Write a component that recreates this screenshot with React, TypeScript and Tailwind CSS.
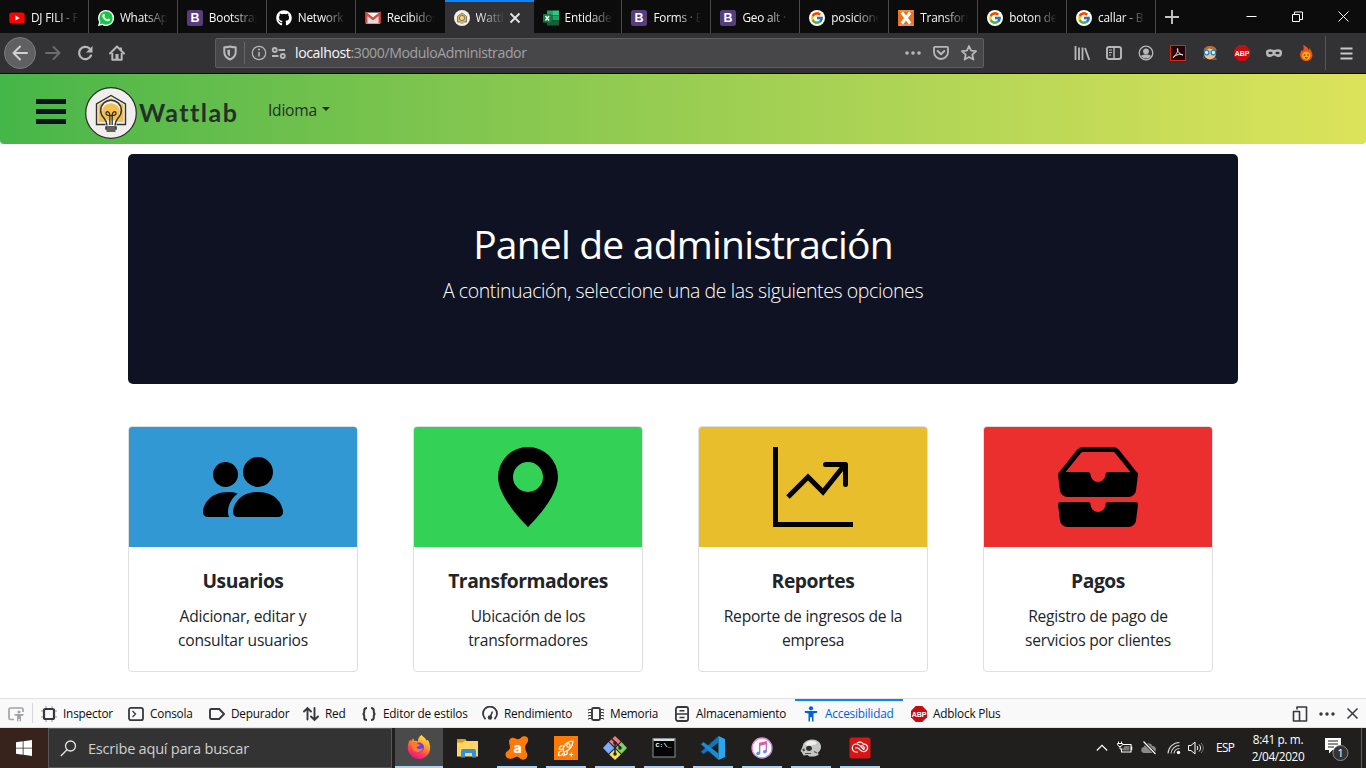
import type { ReactNode } from "react";
import { FaGithub } from "react-icons/fa";
import { FcGoogle } from "react-icons/fc";

const UI = "font-['Open_Sans','Noto_Sans',sans-serif]";

type IconProps = { children: ReactNode; box?: string; className?: string };

function Icon({ children, box = "0 0 16 16", className = "size-4" }: IconProps) {
  return (
    <svg viewBox={box} className={`shrink-0 ${className}`} fill="none">
      {children}
    </svg>
  );
}

/* ---------- favicons ---------- */

const YoutubeIcon = () => (
  <Icon>
    <rect x="0.3" y="2.4" width="15.4" height="11.2" rx="2.6" fill="#f00" />
    <path d="M6.4 5.6v4.8L10.6 8z" fill="#fff" />
  </Icon>
);

const WhatsappIcon = () => (
  <Icon>
    <path d="M8 0a8 8 0 1 1-3.8 15L0 16l1.1-4A8 8 0 0 1 8 0z" fill="#fff" />
    <circle cx="8" cy="8" r="6.7" fill="#12c843" />
    <path d="M1.7 14.3l.8-3 2 2.2z" fill="#12c843" />
    <path
      d="M5.4 3.9c.5-.3.9-.1 1.1.4l.5 1.2c.1.4-.2.7-.6 1.2.7 1.2 1.6 2.1 2.9 2.6.5-.5.7-1 1.2-.8l1.3.7c.5.3.3 1-.1 1.4-.7.7-1.6.9-2.6.6-2.6-.8-4.2-2.6-4.8-4.7-.2-1 .3-2 1.1-2.6z"
      fill="#fff"
    />
  </Icon>
);

const BootstrapIcon = () => (
  <Icon>
    <rect width="16" height="16" rx="2.5" fill="#563d7c" />
    <text x="8" y="12.4" textAnchor="middle" fontFamily="Liberation Sans" fontWeight="700" fontSize="12.5" fill="#fff">
      B
    </text>
  </Icon>
);

const GmailIcon = () => (
  <Icon>
    <path d="M1 2.500h14v11H1z" fill="#f3efee" />
    <path d="M1 13.500V5l7 5.500L15 5v8.500" fill="#e2dedd" />
    <path d="M1.300 13.500V3.600L8 9l6.700-5.400v9.900" stroke="#d9493d" strokeWidth="2.3" />
  </Icon>
);

const WattTabIcon = () => (
  <Icon>
    <circle cx="8" cy="8" r="8" fill="#f1f0ed" />
    <path d="M3.500 12V6.300L8 3l4.500 3.300V12z" fill="#e4b95c" stroke="#77705f" strokeWidth="0.9" />
    <circle cx="8" cy="8" r="2.6" fill="#f0d28c" stroke="#6b6455" strokeWidth="0.8" />
    <path d="M6.600 11h2.800v3H6.600z" fill="#bbb5a5" />
  </Icon>
);

const ExcelIcon = () => (
  <Icon>
    <path d="M4 .5h6v5H4z" fill="#21a366" />
    <path d="M10 .5h6v5h-6z" fill="#33c481" />
    <path d="M4 5.500h6v5H4z" fill="#107c41" />
    <path d="M10 5.500h6v5h-6z" fill="#21a366" />
    <path d="M4 10.500h12v5H4z" fill="#185c37" />
    <rect x="0" y="4" width="8.5" height="8.5" rx="0.6" fill="#107c41" />
    <path d="M2.500 6l3.600 4.500M6.100 6L2.500 10.500" stroke="#fff" strokeWidth="1.4" />
  </Icon>
);

const GoogleTabIcon = () => (
  <span className="flex size-4 shrink-0 items-center justify-center rounded-full bg-white">
    <FcGoogle size={14} />
  </span>
);

const XIcon = () => (
  <Icon>
    <rect width="16" height="16" fill="#e8731c" />
    <path d="M1 1h14M1 15h14" stroke="#f7b27c" strokeWidth="0.8" />
    <path d="M3.800 2.500l8.400 11M12.200 2.500l-8.400 11" stroke="#fff" strokeWidth="3" />
  </Icon>
);

const AbpIcon = () => (
  <Icon>
    <path d="M4.700 0h6.600L16 4.700v6.600L11.300 16H4.700L0 11.300V4.700z" fill="#c70d12" />
    <text x="8" y="10.900" textAnchor="middle" fontFamily="Liberation Sans" fontWeight="700" fontSize="8" fill="#fff" textLength="14.500" lengthAdjust="spacingAndGlyphs">
      ABP
    </text>
  </Icon>
);

/* ---------- browser chrome ---------- */

const tabs: { title: string; icon: ReactNode; active?: boolean }[] = [
  { title: "DJ FILI - F", icon: <YoutubeIcon /> },
  { title: "WhatsApp", icon: <WhatsappIcon /> },
  { title: "Bootstrap", icon: <BootstrapIcon /> },
  { title: "Network", icon: <FaGithub size={16} className="shrink-0 text-white" /> },
  { title: "Recibidos", icon: <GmailIcon /> },
  { title: "Wattlab", icon: <WattTabIcon />, active: true },
  { title: "Entidades", icon: <ExcelIcon /> },
  { title: "Forms · B", icon: <BootstrapIcon /> },
  { title: "Geo alt · B", icon: <BootstrapIcon /> },
  { title: "posiciones", icon: <GoogleTabIcon /> },
  { title: "Transform", icon: <XIcon /> },
  { title: "boton de", icon: <GoogleTabIcon /> },
  { title: "callar - B", icon: <GoogleTabIcon /> },
];

function TabStrip() {
  return (
    <div className="flex h-[33px] bg-[#0c0c0d]">
      <div className="grid w-[1156px] grid-cols-13">
        {tabs.map((t, i) => (
          <div
            key={i}
            className={
              t.active
                ? "flex items-center overflow-hidden border-t-2 border-[#0a84ff] bg-[#323234] pl-[9px] pt-px"
                : `flex items-center overflow-hidden pl-[9px] pt-[2px] ${i === 4 ? "" : "border-r border-[#4a4a4c]"}`
            }
          >
            {t.icon}
            <span
              className={`ml-1.5 overflow-hidden whitespace-nowrap text-[11.8px] tracking-[-0.2px] text-[#f9f9fa] ${
                t.active
                  ? "w-[29px] [mask-image:linear-gradient(to_right,black_10%,transparent)]"
                  : "w-[48px] [mask-image:linear-gradient(to_right,black_50%,transparent)]"
              }`}
            >
              {t.title}
            </span>
            {t.active && (
              <Icon className="ml-1 size-3" box="0 0 12 12">
                <path d="M1.500 1.500l9 9M10.500 1.500l-9 9" stroke="#e6e6e6" strokeWidth="1.8" />
              </Icon>
            )}
          </div>
        ))}
      </div>
      <div className="flex flex-1 items-center justify-between pl-[9px] pr-[17px]">
        <Icon className="size-[14px]" box="0 0 14 14">
          <path d="M7 0v14M0 7h14" stroke="#c4c4c6" strokeWidth="1.9" />
        </Icon>
        <div className="flex items-center gap-[35px]">
          <Icon className="size-[11px]" box="0 0 11 11">
            <path d="M.5 5.500h10" stroke="#fff" />
          </Icon>
          <Icon className="size-[11px]" box="0 0 11 11">
            <path d="M.5 3.500h7v7h-7zM2.500 3.500v-2.500h8v7.500h-3" stroke="#fff" />
          </Icon>
          <Icon className="size-[11px]" box="0 0 11 11">
            <path d="M.5.5l10 10M10.500.5l-10 10" stroke="#fff" />
          </Icon>
        </div>
      </div>
    </div>
  );
}

const G = "#b8b8b9";

function Toolbar() {
  return (
    <div className="flex h-[41px] items-center border-b border-[#0c0c0d] bg-[#323234]">
      <div className="ml-1 flex size-8 items-center justify-center rounded-full border border-[#7b7b7c] bg-[#606062]">
        <Icon>
          <path d="M15 8H1.500M8 1.500L1.500 8 8 14.500" stroke="#d0d0d1" strokeWidth="2" strokeLinecap="round" strokeLinejoin="round" />
        </Icon>
      </div>
      <div className="ml-[9px] flex gap-4">
        <Icon>
          <path d="M1 8h13.500M8.500 2L14.500 8l-6 6" stroke="#6d6d6f" strokeWidth="1.8" strokeLinecap="round" strokeLinejoin="round" />
        </Icon>
        <Icon>
          <path d="M14 10.500A6.200 6.200 0 1 1 12.600 3.500" stroke={G} strokeWidth="2.2" strokeLinecap="round" />
          <path d="M15.500 1v6.500H9z" fill={G} />
        </Icon>
        <Icon>
          <path d="M1 8.500L8 1.500l7 7" stroke={G} strokeWidth="2" strokeLinecap="round" strokeLinejoin="round" />
          <path d="M3.300 8v6.800h9.400V8M12 2.500v3" stroke={G} strokeWidth="2" strokeLinejoin="round" />
          <path d="M6.500 9h3v5.500h-3z" fill={G} />
        </Icon>
      </div>
      <div className="ml-[90px] flex h-[30px] w-[769px] items-center rounded-xs border border-[#5e5e60] bg-[#474749] pl-[6px] pr-[6px]">
        <Icon>
          <path d="M8 1.500c2 .7 3.700.8 5.700.8v4.700c0 3.500-2.200 6-5.700 7.500C4.500 13 2.300 10.500 2.300 7V2.300c2 0 3.700-.1 5.700-.8z" stroke={G} strokeWidth="2" strokeLinejoin="round" />
          <path d="M8 4.500v7c-2-1-2.700-2.500-2.700-4.500V5z" fill={G} />
        </Icon>
        <div className="ml-[6px] h-[22px] w-px bg-[#68686c]" />
        <Icon className="ml-[6px] size-4">
          <circle cx="8" cy="8" r="6.7" stroke={G} strokeWidth="1.2" />
          <path d="M8 7v4.500" stroke={G} strokeWidth="1.5" />
          <circle cx="8" cy="4.6" r="1" fill={G} />
        </Icon>
        <Icon className="ml-1 size-4">
          <circle cx="3.700" cy="5" r="2" stroke={G} strokeWidth="1.9" />
          <path d="M7.500 5H14M1 11h6.500" stroke={G} strokeWidth="1.9" />
          <circle cx="11.800" cy="11" r="2" stroke={G} strokeWidth="1.9" />
        </Icon>
        <div className="ml-[8px] flex-1 whitespace-nowrap text-[14.1px] tracking-[-0.4px] text-[#a2a2a3]">
          <span className="text-[#f9f9fa]">localhost</span>:3000/ModuloAdministrador
        </div>
        <div className="flex gap-3">
          <Icon>
            <circle cx="2" cy="8" r="1.8" fill={G} />
            <circle cx="8" cy="8" r="1.8" fill={G} />
            <circle cx="14" cy="8" r="1.8" fill={G} />
          </Icon>
          <Icon>
            <path d="M2 1.800h12a1 1 0 0 1 1 1V7a7 7 0 0 1-14 0V2.800a1 1 0 0 1 1-1z" stroke={G} strokeWidth="1.8" />
            <path d="M4.700 6L8 9.200 11.300 6" stroke={G} strokeWidth="2" strokeLinecap="round" strokeLinejoin="round" />
          </Icon>
          <Icon>
            <path d="M8 1l2.100 4.700 5 .5-3.800 3.400 1.100 5L8 12l-4.400 2.600 1.100-5L.9 6.200l5-.5z" stroke={G} strokeWidth="1.8" strokeLinejoin="round" />
          </Icon>
        </div>
      </div>
      <div className="ml-[90px] flex gap-4">
        <Icon>
          <path d="M1.500 1v14M5 2.500V15M8.500 2.500V15M11 3l4.300 12" stroke={G} strokeWidth="1.8" />
        </Icon>
        <Icon>
          <rect x="1" y="2" width="14" height="12" rx="2" stroke={G} strokeWidth="1.9" />
          <path d="M8 2v12" stroke={G} strokeWidth="1.5" />
          <path d="M3 5h3M3 7.500h3M3 10h2" stroke={G} />
        </Icon>
        <Icon>
          <circle cx="8" cy="8" r="6.8" stroke={G} strokeWidth="1.3" />
          <circle cx="8" cy="6.3" r="2.9" fill={G} />
          <path d="M3 11c1.500-2 8.500-2 10 0-2 3.300-8 3.300-10 0z" fill={G} />
        </Icon>
        <Icon>
          <rect x="0.5" y="0.5" width="15" height="15" fill="#250505" stroke="#e1240f" />
          <path d="M3 12.500c2-1.500 5.500-5.500 4.700-9C6.500 3 8 9.500 13 10c-2-1.500-7-.5-10 2.500z" stroke="#e6e6e6" strokeWidth="1" />
        </Icon>
        <Icon>
          <circle cx="8" cy="8.500" r="6" fill="#f1c08c" />
          <path d="M1.500 6C2 3 4 1 8 1s7 2 6.500 5l-2-1L7 3.500 3 5.500z" fill="#b56f33" />
          <circle cx="4.600" cy="7.5" r="2.3" fill="#d3f0fb" stroke="#1a86cc" strokeWidth="1.3" />
          <circle cx="11.400" cy="7.500" r="2.300" fill="#d3f0fb" stroke="#1a86cc" strokeWidth="1.3" />
          <path d="M1 10l2 3.500-1.500 1zM11 13l3-.5 1 2.500h-5z" fill="#8a5a30" />
        </Icon>
        <AbpIcon />
        <Icon>
          <path d="M0 7c0-3 4-3.500 8-2 4-1.500 8-1 8 2 0 4-1 5-4 5-2 0-2.500-1.500-4-1.500S6 12 4 12C1 12 0 11 0 7z" fill={G} />
          <ellipse cx="4.5" cy="8" rx="2.2" ry="1.3" fill="#323234" />
          <ellipse cx="11.5" cy="8" rx="2.2" ry="1.3" fill="#323234" />
        </Icon>
        <Icon>
          <path d="M5 0c4 1.500 5 3 5.500 5 .5-.5.7-1 .5-2 2.500 2.500 3.500 5 3.500 7a6.200 6 0 0 1-12.500 0c0-2 1-3 1.500-5l1.500 1C5.800 4 6 2 5 0z" fill="#f0540f" />
          <circle cx="8.300" cy="10.6" r="4.2" fill="#f8a81c" />
          <path d="M5.800 10h1.500M9.300 10h1.500M7 12.500c.8.600 1.800.6 2.600 0" stroke="#5b1a06" />
        </Icon>
      </div>
      <div className="ml-[11px] h-[34px] w-px bg-[#55555a]" />
      <Icon className="ml-[14px] size-[13px]" box="0 0 13 13">
        <path d="M.5 1.500h12M.5 6.500h12M.5 11.500h12" stroke="#c8c8c9" strokeWidth="2" />
      </Icon>
    </div>
  );
}

/* ---------- web page ---------- */

function Logo() {
  return (
    <Icon className="size-[52px]" box="0 0 52 52">
      <circle cx="26" cy="26" r="25.3" fill="#f0efee" stroke="#2b2a26" strokeWidth="1.2" />
      <path d="M13.500 35V17.800L26 11l12.500 6.800V35z" fill="#f5bf4f" />
      <path d="M20.500 37.500H11.500V17L26 8.500 40.500 17v20.500H31.500" stroke="#33322d" strokeWidth="1.4" />
      <path d="M22 39c0-4-1.500-5.500-3.500-8A10.300 10.300 0 1 1 33.500 31c-2 2.500-3.500 4-3.500 8z" fill="#f0efee" />
      <circle cx="26" cy="25" r="8.8" fill="#f5bf4f" />
      <path d="M22 38.500c0-4-1.500-5.500-3.500-8A10.300 10.300 0 1 1 33.500 30.500c-2 2.500-3.500 4-3.500 8" stroke="#33322d" strokeWidth="1.5" />
      <path d="M24.800 38V28.500c-1.200.2-4.300-.3-3.800-2.600.6-2.200 3.800-1.400 3.800 2.600M27.200 38V28.500c1.200.2 4.300-.3 3.800-2.600-.6-2.200-3.800-1.400-3.800 2.600M24.800 28.500h2.400" stroke="#33322d" strokeWidth="1.3" />
      <path d="M21 40h10v2H21zM21.500 44h9" stroke="#33322d" strokeWidth="1.5" />
    </Icon>
  );
}

function Navbar() {
  return (
    <header className="flex h-[70px] rounded-b-sm bg-linear-to-r from-[#45b649] to-[#dce35b] pl-9">
      <div className="mt-[25px] flex h-[25px] w-[30px] flex-col justify-between">
        <div className="h-[5px] bg-[#0f1222]" />
        <div className="h-[5px] bg-[#0f1222]" />
        <div className="h-[5px] bg-[#0f1222]" />
      </div>
      <div className="ml-[19px] mt-[13px]">
        <Logo />
      </div>
      <div className="ml-[2px] mt-[21px] w-[129px] font-[Lato,sans-serif] text-[25px] font-bold leading-[34px] tracking-[1.5px] text-[#26302a]">
        Wattlab
      </div>
      <div className="mt-[24px] flex h-6 text-[15.6px] leading-6 tracking-[-0.25px] text-[#262b2e]">
        Idioma
        <span className="ml-[5px] mt-[9px] size-0 border-x-[4.8px] border-t-[4.8px] border-x-transparent border-t-[#1f2d1f]" />
      </div>
    </header>
  );
}

const cards = [
  {
    title: "Usuarios",
    lines: ["Adicionar, editar y", "consultar usuarios"],
    color: "bg-[#3298d3]",
    paths: [
      "M7 14s-1 0-1-1 1-4 5-4 5 3 5 4-1 1-1 1H7zm4-6a3 3 0 1 0 0-6 3 3 0 0 0 0 6z",
      "M5.216 14A2.238 2.238 0 0 1 5 13c0-1.355.68-2.75 1.936-3.72A6.325 6.325 0 0 0 5 9c-4 0-5 3-5 4s1 1 1 1h4.216z",
      "M4.500 8a2.500 2.500 0 1 0 0-5 2.500 2.500 0 0 0 0 5z",
    ],
  },
  {
    title: "Transformadores",
    lines: ["Ubicación de los", "transformadores"],
    color: "bg-[#33d256]",
    paths: ["M8 16s6-5.686 6-10A6 6 0 0 0 2 6c0 4.314 6 10 6 10zm0-7a3 3 0 1 0 0-6 3 3 0 0 0 0 6z"],
  },
  {
    title: "Reportes",
    lines: ["Reporte de ingresos de la", "empresa"],
    color: "bg-[#e8be2d]",
    paths: [
      "M0 0h1v16H0V0zm1 15h15v1H1v-1z",
      "M14.390 4.312L10.041 9.750 7 6.707l-3.646 3.647-.708-.708L7 5.293 9.959 8.250l3.650-4.563.781.624z",
      "M10 3.500a.5.5 0 0 1 .5-.5h4a.5.5 0 0 1 .5.5v4a.5.5 0 0 1-1 0V4h-3.500a.5.5 0 0 1-.5-.5z",
    ],
  },
  {
    title: "Pagos",
    lines: ["Registro de pago de", "servicios por clientes"],
    color: "bg-[#eb2e2e]",
    paths: [
      "M.125 11.170A.5.5 0 0 1 .5 11H6a.5.5 0 0 1 .5.5 1.500 1.500 0 0 0 3 0 .5.5 0 0 1 .5-.5h5.500a.5.5 0 0 1 .496.562l-.390 3.124A1.500 1.500 0 0 1 14.117 16H1.883a1.500 1.500 0 0 1-1.489-1.314l-.390-3.124a.5.5 0 0 1 .121-.393z",
      "M3.810.563A1.500 1.500 0 0 1 4.980 0h6.040a1.500 1.500 0 0 1 1.170.563l3.700 4.625a.5.5 0 0 1-.780.624l-3.700-4.624A.5.5 0 0 0 11.020 1H4.980a.5.5 0 0 0-.390.188L.890 5.812a.5.5 0 1 1-.780-.624L3.810.563z",
      "M.125 5.170A.5.5 0 0 1 .5 5H6a.5.5 0 0 1 .5.5 1.500 1.500 0 0 0 3 0A.5.5 0 0 1 10 5h5.500a.5.5 0 0 1 .496.562l-.390 3.124A1.500 1.500 0 0 1 14.117 10H1.883A1.500 1.500 0 0 1 .394 8.686l-.390-3.124a.5.5 0 0 1 .121-.393z",
    ],
  },
];

function Page() {
  return (
    <main className="h-[624px] bg-white">
      <Navbar />
      <div className="mx-auto mt-2.5 w-[1110px]">
        <section className="flex h-[230px] flex-col items-center rounded-[5px] bg-[#0f1222] pt-[63px] text-white">
          <h1 className="whitespace-nowrap text-[39px] leading-[54px] tracking-[-0.8px]">Panel de administración</h1>
          <p className="mt-[5px] whitespace-nowrap text-[19.5px] font-light leading-[30px] tracking-[-0.4px]">
            A continuación, seleccione una de las siguientes opciones
          </p>
        </section>
        <section className="mt-[42px] flex gap-[55px]">
          {cards.map((c) => (
            <article key={c.title} className="h-[246px] w-[230px] overflow-hidden rounded border border-[#dfdfdf]">
              <div className={`flex h-[120px] items-center justify-center ${c.color}`}>
                <Icon className="size-20">
                  {c.paths.map((d) => (
                    <path key={d} d={d} fill="#000" fillRule="evenodd" />
                  ))}
                </Icon>
              </div>
              <div className="pt-[20px] text-center text-[#212529]">
                <h2 className="text-[19.3px] font-bold leading-7 tracking-[-0.45px]">{c.title}</h2>
                <p className="mt-[9px] whitespace-nowrap text-[15.6px] leading-6 tracking-[-0.25px]">
                  {c.lines[0]}
                  <br />
                  {c.lines[1]}
                </p>
              </div>
            </article>
          ))}
        </section>
      </div>
    </main>
  );
}

/* ---------- developer tools ---------- */

const D = "#38383d";

const tools: { name: string; width: string; icon: ReactNode; active?: boolean }[] = [
  {
    name: "Inspector",
    width: "w-[87px]",
    icon: (
      <Icon>
        <rect x="3" y="3" width="10" height="10" rx="1.5" stroke={D} strokeWidth="2.2" />
        <path d="M5 0v2M11 0v2M5 14v2M11 14v2M0 5h2M14 5h2M0 11h2M14 11h2" stroke="#98989b" strokeWidth="1" />
      </Icon>
    ),
  },
  {
    name: "Consola",
    width: "w-[81px]",
    icon: (
      <Icon>
        <rect x="1" y="1.8" width="14" height="12.4" rx="2" stroke={D} strokeWidth="1.8" />
        <path d="M4.500 5l3 3-3 3" stroke={D} strokeWidth="1.3" />
      </Icon>
    ),
  },
  {
    name: "Depurador",
    width: "w-[94px]",
    icon: (
      <Icon>
        <path d="M2.200 3h8L15 8l-4.800 5h-8A1.200 1.200 0 0 1 1 11.800V4.200A1.200 1.200 0 0 1 2.200 3z" stroke={D} strokeWidth="1.9" strokeLinejoin="round" />
      </Icon>
    ),
  },
  {
    name: "Red",
    width: "w-[58px]",
    icon: (
      <Icon>
        <path d="M4.500 13.500V2M1 5.500L4.500 2 8 5.500M11.500 2v12M8 10.500l3.500 3.500 3.500-3.500" stroke={D} strokeWidth="1.9" strokeLinecap="round" />
      </Icon>
    ),
  },
  {
    name: "Editor de estilos",
    width: "w-[121px]",
    icon: (
      <Icon>
        <path
          d="M6 2C3.500 2 3.200 3 3.200 4.500V6c0 1-.5 2-1.700 2 1.200 0 1.700 1 1.700 2v1.500C3.200 13 3.500 14 6 14M10 2c2.500 0 2.800 1 2.800 2.500V6c0 1 .5 2 1.700 2-1.200 0-1.700 1-1.700 2v1.500c0 1.500-.3 2.500-2.800 2.500"
          stroke={D}
          strokeWidth="2"
        />
      </Icon>
    ),
  },
  {
    name: "Rendimiento",
    width: "w-[106px]",
    icon: (
      <Icon>
        <path d="M3 12.500A7 7 0 1 1 13 12.500" stroke={D} strokeWidth="1.8" strokeLinecap="round" />
        <circle cx="8" cy="11.5" r="2.2" fill={D} />
        <path d="M8 11.500L10.500 5.500" stroke={D} strokeWidth="1.6" />
      </Icon>
    ),
  },
  {
    name: "Memoria",
    width: "w-[86px]",
    icon: (
      <Icon>
        <rect x="4" y="2" width="8" height="12" rx="1.5" stroke={D} strokeWidth="1.9" />
        <path d="M3 3.500H.5v1M3 6.500H.5v1M3 9.500H.5v1M3 12.500H.5v1M13 3.500h2.500v1M13 6.500h2.500v1M13 9.500h2.500v1M13 12.500h2.500v1" stroke={D} />
      </Icon>
    ),
  },
  {
    name: "Almacenamiento",
    width: "w-[129px]",
    icon: (
      <Icon>
        <rect x="1.9" y="1" width="12.2" height="14" rx="2" stroke={D} strokeWidth="1.8" />
        <path d="M2 8h12M5.500 4.800h5M5.500 11.500h5" stroke={D} strokeWidth="1.4" />
      </Icon>
    ),
  },
  {
    name: "Accesibilidad",
    width: "w-[108px]",
    active: true,
    icon: (
      <Icon>
        <circle cx="8" cy="2.3" r="2.1" fill="#0060df" />
        <path d="M1.800 5h12.400v1.800L10.500 7.500v8H9v-4.300H7v4.300H5.500v-8L1.800 6.800z" fill="#0060df" />
      </Icon>
    ),
  },
  { name: "Adblock Plus", width: "w-[107px]", icon: <AbpIcon /> },
];

function DevTools() {
  return (
    <div className="flex h-[30px] border-b border-t border-[#e0e0e2] bg-[#f9f9fa]">
      <div className="my-1 flex w-[33px] items-center border-r border-[#d7d7db] pl-2">
        <Icon className="mt-px size-4">
          <path d="M6 13.500H2.500A1.500 1.500 0 0 1 1 12V3.500A1.500 1.500 0 0 1 2.500 2h11A1.500 1.500 0 0 1 15 3.500V6" stroke="#a4a4a8" strokeWidth="1.7" />
          <circle cx="11" cy="6" r="1.6" fill="#a4a4a8" />
          <path d="M6.500 8h9v1.500l-2.500.5v5.500h-1.300V13h-1.400v2.500H9V10l-2.500-.5z" fill="#a4a4a8" />
        </Icon>
      </div>
      {tools.map((t) => (
        <div
          key={t.name}
          className={`flex shrink-0 items-center gap-1.5 whitespace-nowrap pl-2 text-[11.8px] tracking-[-0.2px] ${t.width} ${
            t.active ? "border-t-2 border-[#0a84ff] pb-px text-[#0060df]" : "pt-px text-[#0c0c0d]"
          }`}
        >
          {t.icon}
          {t.name}
        </div>
      ))}
      <div className="ml-auto flex items-center gap-[11px] pr-[7px] pt-px">
        <Icon>
          <path d="M5 3.500V1h9.500v14H8M1.500 5.500h6V15h-6z" stroke={D} strokeWidth="1.6" strokeLinejoin="round" />
        </Icon>
        <Icon>
          <circle cx="2" cy="8" r="1.7" fill={D} />
          <circle cx="8" cy="8" r="1.7" fill={D} />
          <circle cx="14" cy="8" r="1.7" fill={D} />
        </Icon>
        <Icon className="size-[13px]" box="0 0 13 13">
          <path d="M1.500 1.500l10 10M11.500 1.500l-10 10" stroke={D} strokeWidth="1.5" />
        </Icon>
      </div>
    </div>
  );
}

/* ---------- taskbar ---------- */

const apps: { id: string; icon: ReactNode; running: boolean }[] = [
  {
    id: "explorer",
    running: false,
    icon: (
      <Icon box="0 0 24 24" className="size-6">
        <path d="M1 3h8l1.500 2H22v15.500H1z" fill="#ffd561" />
        <path d="M1 3h8l1.500 2H8L7 6.500H1z" fill="#d99b16" />
        <path d="M5 21.500V15a2 2 0 0 1 2-2h11a2 2 0 0 1 2 2v6.500h-4V17H9v4.500z" fill="#2f8fe0" />
      </Icon>
    ),
  },
  {
    id: "avast",
    running: true,
    icon: (
      <Icon box="0 0 24 24" className="size-6">
        <path
          d="M4.500 3.800C6 1.500 8.500 1.500 10.500 2.500c3 1.300 4 .5 5.500-.8C18-.3 21.500-.3 22.800 2.200c1 2.500-.3 4-1.500 5.800-1.500 2.300-1.500 4.500-.3 7 1.200 2.300 2.200 4.500.5 7-2 2.500-5 2-6.800.3-1.700-1.600-3-1.800-5-.9-2.700 1.200-5.500 2.300-8 .2C-.3 19.300.3 16.500 2.500 15c2.300-1.500 2.800-3 2.300-5.200C4.400 7.700 3.500 5.700 4.500 3.800z"
          fill="#ff7b08"
        />
        <text x="12.500" y="16.500" textAnchor="middle" fontFamily="Inter" fontWeight="800" fontSize="14" fill="#fff">
          a
        </text>
      </Icon>
    ),
  },
  {
    id: "rocket",
    running: true,
    icon: (
      <Icon box="0 0 24 24" className="size-6">
        <rect width="24" height="24" fill="#ff7a00" />
        <path d="M9 14c0-4 4-9 10-9 0 5-4 10-9 11zM10.500 9.500L6.500 10 5 13l4 .5M13.500 14.500L13 18l-3 1.500.5-3.500M8 15l-3 1-.5 3.500L8 19l1-2M15.300 18.500h4M17.300 16.500v4" stroke="#fff" strokeWidth="1.2" />
        <circle cx="14.5" cy="9.5" r="1.7" stroke="#fff" strokeWidth="1.1" />
      </Icon>
    ),
  },
  {
    id: "git",
    running: true,
    icon: (
      <Icon box="0 0 24 24" className="size-6">
        <path d="M12 0L17.800 5.500 12 11 6.200 5.500z" fill="#f07b7b" />
        <path d="M18.500 6L24 12l-5.500 5.800L12.700 12z" fill="#7fd360" />
        <path d="M5.500 6L11.300 12l-5.800 5.800L0 12z" fill="#7caefa" />
        <path d="M12 12.700l5.800 5.800L12 24l-5.800-5.500z" fill="#f7df62" />
        <path d="M8 2l9.500 9.500M12 7v11" stroke="#25262a" strokeWidth="1.5" />
        <circle cx="12" cy="7" r="1.8" fill="#25262a" />
        <circle cx="17" cy="12" r="1.8" fill="#25262a" />
        <circle cx="12" cy="18" r="1.8" fill="#25262a" />
      </Icon>
    ),
  },
  {
    id: "terminal",
    running: true,
    icon: (
      <Icon box="0 0 24 24" className="size-6">
        <rect x="1" y="2.5" width="22" height="18.5" fill="#050505" stroke="#8e9295" />
        <path d="M1.500 4h21" stroke="#d8dcdf" strokeWidth="2" />
        <text x="3.5" y="11" fontFamily="Liberation Mono" fontWeight="700" fontSize="6" fill="#fff" textLength="16" lengthAdjust="spacingAndGlyphs">
          C:\_
        </text>
      </Icon>
    ),
  },
  {
    id: "code",
    running: true,
    icon: (
      <Icon box="0 0 24 24" className="size-6">
        <path d="M17.500 6.500L2.500 18 0 15.800 17.500 0z" fill="#0d76c0" />
        <path d="M17.500 17.500L2.500 6 0 8.200 17.500 24z" fill="#1a8ad6" />
        <path d="M17.500 0L24 3v18l-6.500 3z" fill="#2aa5ee" />
      </Icon>
    ),
  },
  {
    id: "music",
    running: true,
    icon: (
      <Icon box="0 0 24 24" className="size-6">
        <defs>
          <linearGradient id="note" x1="0" y1="0" x2="0" y2="1">
            <stop offset="0" stopColor="#f2529b" />
            <stop offset="1" stopColor="#4b9df5" />
          </linearGradient>
          <linearGradient id="ring" x1="0" y1="0" x2="1" y2="1">
            <stop offset="0" stopColor="#f48bbb" />
            <stop offset="1" stopColor="#b389ec" />
          </linearGradient>
        </defs>
        <circle cx="12" cy="12" r="10" fill="#fafafa" stroke="url(#ring)" strokeWidth="1.3" />
        <path d="M9 6.800l8-1.800v10c0 3-4 3-4 .8 0-1.700 1.800-1.800 2.700-2V8.500l-5.400 1.200v7c0 3-4 3-4 .8 0-1.700 1.800-1.800 2.700-2z" fill="url(#note)" />
      </Icon>
    ),
  },
  {
    id: "skull",
    running: true,
    icon: (
      <Icon box="0 0 24 24" className="size-6">
        <path d="M4.500 7.500C8 3 16 2 20 6c3.500 4 2 8.500-1 10.500l.5 2.500-4 1.500h-5l-2-1.500-4 .5-1.500-3L1.500 15 3 12z" fill="#c5c7c4" />
        <path d="M6 8c3-4 9-4.500 12-1-2 3-6 1-8 4z" fill="#eeefec" />
        <ellipse cx="10" cy="12.300" rx="2.900" ry="2.600" fill="#2f2f2d" />
        <path d="M3.500 13l1.800-.5.5 2.500-2 .3z" fill="#3b3b38" />
        <path d="M6 17.500h6M15 15.500l3 1.500" stroke="#555" strokeWidth="1.1" />
      </Icon>
    ),
  },
  {
    id: "creative",
    running: true,
    icon: (
      <Icon box="0 0 24 24" className="size-6">
        <rect x="1.5" y="1.5" width="21" height="21" rx="2.5" fill="#da1414" />
        <path
          d="M10 16H8.300a4 4 0 0 1 0-8c2.200 0 3.400 1.300 4.700 2.700l2.300 2.300M7.300 12.300c1.500-1.300 3-.3 4.200 1 2 2.300 4.700 3.200 6.800 1.200 3-3.300.2-7-3-6.300-1.200-2.200-4-3-6.300-1M12.500 10c3-1.500 5.200 2.500 2.700 3.600"
          stroke="#fff"
          strokeWidth="1.2"
        />
      </Icon>
    ),
  },
];

const Firefox = () => (
  <Icon box="0 0 24 24" className="size-6">
    <defs>
      <linearGradient id="fire" x1="0.8" y1="0" x2="0.3" y2="1">
        <stop offset="0" stopColor="#fff04a" />
        <stop offset="0.4" stopColor="#ff9a2a" />
        <stop offset="0.7" stopColor="#ff4150" />
        <stop offset="1" stopColor="#e3138a" />
      </linearGradient>
    </defs>
    <path
      d="M14.500 0c1.500 2 4 3 5 5.500L21 5c2.500 4.500 3 9 1 13-2.500 4-6 6-10 6A11.300 11.300 0 0 1 .8 12.500C.8 9.500 1.500 7 3.200 4.500l.8 2C4.500 5 5.500 4 6.500 3.500L7 6c1.700-.5 3 0 4 .8C10.500 4 12 1.500 14.500 0z"
      fill="url(#fire)"
    />
    <circle cx="12" cy="12.5" r="5" fill="#6a3fe0" />
    <path d="M4 7.500c3-1.500 5-.5 7 1.500l2.500 1c-1 1.500-3.500 1-4 2.500 1.500 2 4.500 2 6.500.5-.5 3-3 4.500-6 4-3.500-.5-5.500-4-6-9.500z" fill="#ff7a2a" />
  </Icon>
);

function Taskbar() {
  return (
    <div className="flex h-10 bg-[#201f1e] text-white">
      <div className="flex w-12 items-center justify-center bg-[#38221c]">
        <Icon>
          <path d="M0 2.300l6.700-1v6.400H0zM7.500 1.200L16 0v7.700H7.500zM0 8.500h6.700v6.300l-6.700-1zM7.500 8.500H16V16l-8.500-1.200z" fill="#fff" />
        </Icon>
      </div>
      <div className="flex w-[344px] items-center border border-[#5a5857] bg-[#333] pl-[11px]">
        <Icon className="size-[17px]" box="0 0 17 17">
          <circle cx="10.5" cy="6" r="5" stroke="#e4e4e4" strokeWidth="1.3" />
          <path d="M7 9.700L.8 16" stroke="#e4e4e4" strokeWidth="1.3" />
        </Icon>
        <span className="ml-[11px] whitespace-nowrap pt-px text-[14.6px] tracking-[-0.25px] text-[#cfcfcf]">Escribe aquí para buscar</span>
      </div>
      <div className="ml-[3px] flex w-12 items-center justify-center border-b-2 border-[#a8d2fb] bg-[#4a4a4a]">
        <Firefox />
      </div>
      {apps.map((a) => (
        <div key={a.id} className="flex w-[49px] flex-col items-center pl-px">
          <div className="flex h-[38px] items-center pt-0.5">{a.icon}</div>
          <div className={a.running ? "h-0.5 w-10 bg-[#a8d2fb]" : "h-0.5 w-10"} />
        </div>
      ))}
      <div className="ml-auto flex items-center">
        <Icon className="size-3" box="0 0 12 12">
          <path d="M.8 8.500L6 3.300l5.200 5.200" stroke="#fff" strokeWidth="1.2" />
        </Icon>
        <Icon className="ml-[9px] size-4">
          <path d="M6 4.500h8v7.500H4.500V9M14.700 6.500v3.500" stroke="#fff" strokeWidth="1.1" />
          <path d="M7.500 6h5v4.500H6V8.500z" fill="#777" />
          <path d="M1.500 1.500V4M4.500 1.500V4M.5 3.500h5c0 2-1 3-2.500 3s-2.500-1-2.500-3zM3 6.500V9h2.500" stroke="#fff" />
        </Icon>
        <Icon className="ml-2 size-4">
          <path d="M3.500 13a3 3 0 0 1-.5-6 4.500 4.500 0 0 1 8.500-1A3.600 3.600 0 0 1 12.500 13z" fill="#8b8a89" />
          <path d="M2.500 1.500l12 12.500" stroke="#201f1e" strokeWidth="3" />
          <path d="M2.500 1.500l12 12.500" stroke="#fff" strokeWidth="1.1" />
        </Icon>
        <Icon className="ml-[9px] size-4">
          <path d="M2 13.500A11.500 11.500 0 0 1 13.500 2.500M5 13.500A8.500 8.500 0 0 1 13.500 5.500M8 13.500A5.500 5.500 0 0 1 13.500 8.500" stroke="#d4d4d4" strokeWidth="1.1" />
          <circle cx="12.5" cy="12.5" r="1.7" fill="#fff" />
        </Icon>
        <Icon className="ml-[6px] size-4">
          <path d="M.5 5.500h2.500L7 2v12L3 10.500H.5z" stroke="#fff" />
          <path d="M9 6c1 1.200 1 2.800 0 4M11 4.500c2 2 2 5 0 7" stroke="#fff" />
          <path d="M13 3c3 3 3 7 0 10" stroke="#777" />
        </Icon>
        <span className="ml-3 w-[20px] whitespace-nowrap text-[11.8px] tracking-[-0.6px]">ESP</span>
        <div className="ml-[14px] w-[56px] whitespace-nowrap text-center text-[11.8px] leading-[17px] tracking-[-0.35px]">
          8:41 p. m.
          <br />
          2/04/2020
        </div>
        <svg viewBox="0 0 24 26" className="ml-[19px] h-[26px] w-6 shrink-0">
          <path d="M0 3h16v12H7.500L4 18.500V15H0z" fill="#fff" />
          <path d="M3 6h10M3 9h10M3 12h6" stroke="#201f1e" strokeWidth="1.1" />
          <circle cx="15.5" cy="18" r="7.5" fill="#333" stroke="#8a8a8a" />
          <text x="15.5" y="22" textAnchor="middle" fontFamily="Open Sans" fontSize="11.5" fill="#fff">
            1
          </text>
        </svg>
        <div className="ml-3 mr-1 h-10 w-px bg-[#5f5e5d]" />
      </div>
    </div>
  );
}

export default function App() {
  return (
    <div className={`flex h-[768px] w-[1366px] flex-col overflow-hidden bg-white ${UI}`}>
      <TabStrip />
      <Toolbar />
      <Page />
      <DevTools />
      <Taskbar />
    </div>
  );
}
